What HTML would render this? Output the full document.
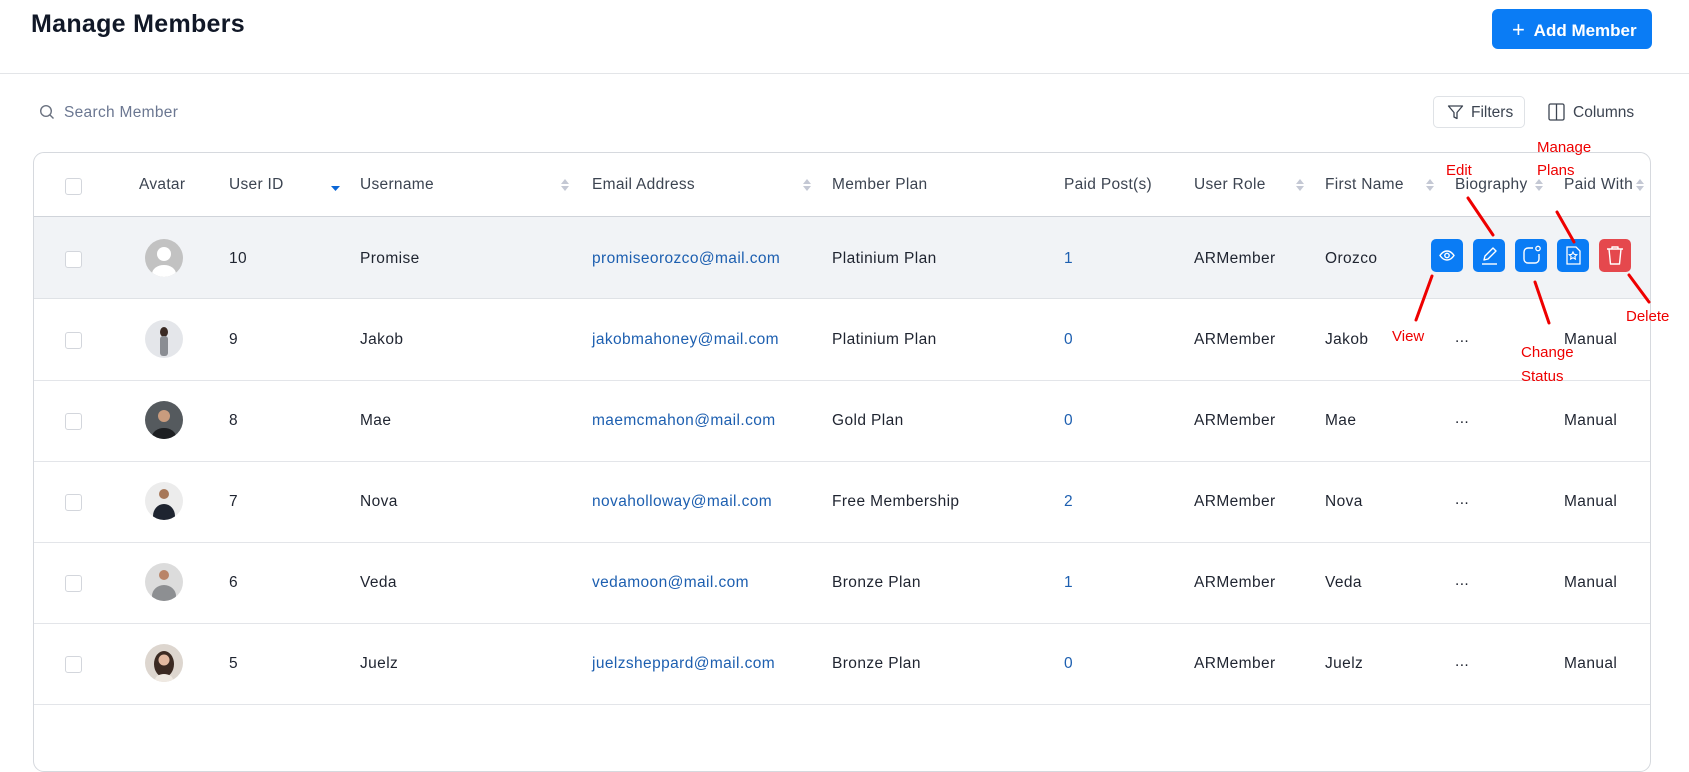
<!DOCTYPE html>
<html><head><meta charset="utf-8"><style>
*{margin:0;padding:0;box-sizing:border-box}
body{width:1689px;height:718px;overflow:hidden;background:#fff;font-family:"Liberation Sans",sans-serif;position:relative;color:#1f2937}
.a{position:absolute;white-space:nowrap}
.h{font-size:15.5px;color:#3c4451;top:176px;letter-spacing:0.3px}
.t{font-size:15.5px;color:#1f2430;letter-spacing:0.4px}
.em{color:#1d5fb0}
.cb{position:absolute;left:65px;width:17px;height:17px;border:1.5px solid #d3d6dc;border-radius:3px;background:#fff}
.sort{position:absolute;width:8px;height:12px}
.btn{position:absolute;top:239px;width:32px;height:33px;border-radius:5px;background:#0a7cf5}
.red{color:#e00;font-size:15px}
.av{position:absolute;left:145px;width:38px;height:38px;border-radius:50%;overflow:hidden}
</style></head><body>
<div class="a" style="left:31px;top:10px;font-size:25px;font-weight:bold;color:#111827;letter-spacing:0.3px">Manage Members</div>
<div class="a" style="left:1492px;top:9px;width:160px;height:40px;background:#0a7cf5;border-radius:6px;color:#fff;font-size:17px;font-weight:bold;line-height:40px;padding-left:20px"><span style="font-weight:normal;font-size:22px;position:relative;top:1px">+</span>&nbsp; Add Member</div>
<div class="a" style="left:0;top:73px;width:1689px;height:1px;background:#e3e5e8"></div>
<svg class="a" style="left:39px;top:104px" width="16" height="16" viewBox="0 0 16 16"><circle cx="7" cy="7" r="5.3" fill="none" stroke="#6b7280" stroke-width="1.4"/><path d="M11 11l3.5 3.5" stroke="#6b7280" stroke-width="1.4"/></svg>
<div class="a" style="left:64px;top:104px;font-size:15.5px;color:#6b7791;letter-spacing:0.3px">Search Member</div>
<div class="a" style="left:1433px;top:96px;width:92px;height:32px;border:1px solid #dfe2e6;border-radius:5px"></div>
<svg class="a" style="left:1447px;top:104px" width="17" height="17" viewBox="0 0 17 17"><path d="M1.5 2h14l-5.5 6.5v6l-3-1.5v-4.5z" fill="none" stroke="#3c4451" stroke-width="1.3" stroke-linejoin="round"/></svg>
<div class="a" style="left:1471px;top:104px;font-size:15.5px;color:#3c4451">Filters</div>
<svg class="a" style="left:1548px;top:103px" width="17" height="18" viewBox="0 0 17 18"><rect x="1" y="1" width="15" height="16" rx="1.5" fill="none" stroke="#3c4451" stroke-width="1.3"/><path d="M8.5 1v16" stroke="#3c4451" stroke-width="1.3"/></svg>
<div class="a" style="left:1573px;top:104px;font-size:15.5px;color:#3c4451">Columns</div>

<div class="a" style="left:33px;top:152px;width:1618px;height:620px;border:1px solid #d6d9de;border-radius:11px;overflow:hidden"></div>
<div class="a" style="left:34px;top:216px;width:1616px;height:1px;background:#d0d4da"></div>
<div class="a" style="left:34px;top:217px;width:1616px;height:82px;background:#f1f3f6;border-bottom:1px solid #dfe2e6"></div>
<div class="a" style="left:34px;top:380px;width:1616px;height:1px;background:#e3e5e9"></div>
<div class="a" style="left:34px;top:461px;width:1616px;height:1px;background:#e3e5e9"></div>
<div class="a" style="left:34px;top:542px;width:1616px;height:1px;background:#e3e5e9"></div>
<div class="a" style="left:34px;top:623px;width:1616px;height:1px;background:#e3e5e9"></div>
<div class="a" style="left:34px;top:704px;width:1616px;height:1px;background:#e3e5e9"></div>

<div class="cb" style="top:178px"></div>
<div class="a h" style="left:139px">Avatar</div>
<div class="a h" style="left:229px">User ID</div>
<svg class="a" style="left:331px;top:186px" width="9" height="6"><path d="M0 0h9L4.5 5z" fill="#0a66d6"/></svg>
<div class="a h" style="left:360px">Username</div>
<div class="a h" style="left:592px">Email Address</div>
<div class="a h" style="left:832px">Member Plan</div>
<div class="a h" style="left:1064px">Paid Post(s)</div>
<div class="a h" style="left:1194px">User Role</div>
<div class="a h" style="left:1325px">First Name</div>
<div class="a h" style="left:1455px">Biography</div>
<div class="a h" style="left:1564px">Paid With</div>
<svg width="0" height="0" style="position:absolute"><defs><g id="s"><path d="M0 5L4 0L8 5z M0 7L4 12L8 7z" fill="#c4c8d4"/></g></defs></svg>
<svg class="sort" style="left:561px;top:179px"><use href="#s"/></svg>
<svg class="sort" style="left:803px;top:179px"><use href="#s"/></svg>
<svg class="sort" style="left:1296px;top:179px"><use href="#s"/></svg>
<svg class="sort" style="left:1426px;top:179px"><use href="#s"/></svg>
<svg class="sort" style="left:1535px;top:179px"><use href="#s"/></svg>
<svg class="sort" style="left:1636px;top:179px"><use href="#s"/></svg>

<div class="cb" style="top:251px"></div>
<div class="av" style="top:239px;background:#c2c2c2"><svg width="38" height="38"><circle cx="19" cy="15" r="7" fill="#fff"/><ellipse cx="19" cy="35" rx="12" ry="9" fill="#fff"/></svg></div>
<div class="a t" style="left:229px;top:250px">10</div>
<div class="a t" style="left:360px;top:250px">Promise</div>
<div class="a t em" style="left:592px;top:250px">promiseorozco@mail.com</div>
<div class="a t" style="left:832px;top:250px">Platinium Plan</div>
<div class="a t em" style="left:1064px;top:250px">1</div>
<div class="a t" style="left:1194px;top:250px">ARMember</div>
<div class="a t" style="left:1325px;top:250px">Orozco</div>

<div class="btn" style="left:1431px"><svg width="32" height="33" viewBox="0 0 32 33"><path d="M9 16.5c4-6 10-6 14 0c-4 6-10 6-14 0z" fill="none" stroke="#fff" stroke-width="1.4"/><circle cx="16" cy="16.5" r="2.2" fill="none" stroke="#fff" stroke-width="1.4"/></svg></div>
<div class="btn" style="left:1473px"><svg width="32" height="33" viewBox="0 0 32 33"><path d="M11 21l1-4l8-8l3 3l-8 8z" fill="none" stroke="#fff" stroke-width="1.4" stroke-linejoin="round"/><path d="M9 25h15" stroke="#fff" stroke-width="1.4"/></svg></div>
<div class="btn" style="left:1515px"><svg width="32" height="33" viewBox="0 0 32 33"><path d="M18 9h-5a4 4 0 0 0-4 4v7a4 4 0 0 0 4 4h7a4 4 0 0 0 4-4v-5" fill="none" stroke="#fff" stroke-width="1.4"/><circle cx="23" cy="9.5" r="2.2" fill="none" stroke="#fff" stroke-width="1.3"/></svg></div>
<div class="btn" style="left:1557px"><svg width="32" height="33" viewBox="0 0 32 33"><path d="M10 8h9l4 4v13h-13z" fill="none" stroke="#fff" stroke-width="1.3"/><path d="M16 13l1.2 2.4l2.6.3l-1.9 1.8l.5 2.6l-2.4-1.3l-2.4 1.3l.5-2.6l-1.9-1.8l2.6-.3z" fill="none" stroke="#fff" stroke-width="1.1"/></svg></div>
<div class="btn" style="left:1599px;background:#e5484d"><svg width="32" height="33" viewBox="0 0 32 33"><path d="M8 10h16M13 10v-2h6v2M10 10l1.5 15h9l1.5-15" fill="none" stroke="#fff" stroke-width="1.4" stroke-linejoin="round"/></svg></div>

<div class="cb" style="top:332px"></div>
<div class="av" style="top:320px;background:#e4e6ea"><svg width="38" height="38"><ellipse cx="19" cy="12" rx="4" ry="5" fill="#3a2a24"/><rect x="15" y="16" width="8" height="20" rx="3" fill="#8a8d93"/></svg></div>
<div class="a t" style="left:229px;top:331px">9</div>
<div class="a t" style="left:360px;top:331px">Jakob</div>
<div class="a t em" style="left:592px;top:331px">jakobmahoney@mail.com</div>
<div class="a t" style="left:832px;top:331px">Platinium Plan</div>
<div class="a t em" style="left:1064px;top:331px">0</div>
<div class="a t" style="left:1194px;top:331px">ARMember</div>
<div class="a t" style="left:1325px;top:331px">Jakob</div>
<div class="a t" style="left:1455px;top:329px">...</div>
<div class="a t" style="left:1564px;top:331px">Manual</div>

<div class="cb" style="top:413px"></div>
<div class="av" style="top:401px;background:#555a5e"><svg width="38" height="38"><circle cx="19" cy="15" r="6" fill="#c99c7e"/><ellipse cx="19" cy="36" rx="12" ry="9" fill="#1d1f22"/></svg></div>
<div class="a t" style="left:229px;top:412px">8</div>
<div class="a t" style="left:360px;top:412px">Mae</div>
<div class="a t em" style="left:592px;top:412px">maemcmahon@mail.com</div>
<div class="a t" style="left:832px;top:412px">Gold Plan</div>
<div class="a t em" style="left:1064px;top:412px">0</div>
<div class="a t" style="left:1194px;top:412px">ARMember</div>
<div class="a t" style="left:1325px;top:412px">Mae</div>
<div class="a t" style="left:1455px;top:410px">...</div>
<div class="a t" style="left:1564px;top:412px">Manual</div>

<div class="cb" style="top:494px"></div>
<div class="av" style="top:482px;background:#ececec"><svg width="38" height="38"><circle cx="19" cy="12" r="5" fill="#a77859"/><ellipse cx="19" cy="34" rx="11" ry="12" fill="#1e2430"/></svg></div>
<div class="a t" style="left:229px;top:493px">7</div>
<div class="a t" style="left:360px;top:493px">Nova</div>
<div class="a t em" style="left:592px;top:493px">novaholloway@mail.com</div>
<div class="a t" style="left:832px;top:493px">Free Membership</div>
<div class="a t em" style="left:1064px;top:493px">2</div>
<div class="a t" style="left:1194px;top:493px">ARMember</div>
<div class="a t" style="left:1325px;top:493px">Nova</div>
<div class="a t" style="left:1455px;top:491px">...</div>
<div class="a t" style="left:1564px;top:493px">Manual</div>

<div class="cb" style="top:575px"></div>
<div class="av" style="top:563px;background:#dcdcdc"><svg width="38" height="38"><circle cx="19" cy="12" r="5" fill="#b98468"/><ellipse cx="19" cy="33" rx="12" ry="11" fill="#8d8f92"/></svg></div>
<div class="a t" style="left:229px;top:574px">6</div>
<div class="a t" style="left:360px;top:574px">Veda</div>
<div class="a t em" style="left:592px;top:574px">vedamoon@mail.com</div>
<div class="a t" style="left:832px;top:574px">Bronze Plan</div>
<div class="a t em" style="left:1064px;top:574px">1</div>
<div class="a t" style="left:1194px;top:574px">ARMember</div>
<div class="a t" style="left:1325px;top:574px">Veda</div>
<div class="a t" style="left:1455px;top:572px">...</div>
<div class="a t" style="left:1564px;top:574px">Manual</div>

<div class="cb" style="top:656px"></div>
<div class="av" style="top:644px;background:#ddd6cf"><svg width="38" height="38"><ellipse cx="19" cy="20" rx="10" ry="13" fill="#3b2a22"/><circle cx="19" cy="16" r="5.5" fill="#e2b8a0"/><ellipse cx="19" cy="36" rx="9" ry="6" fill="#efe9e2"/></svg></div>
<div class="a t" style="left:229px;top:655px">5</div>
<div class="a t" style="left:360px;top:655px">Juelz</div>
<div class="a t em" style="left:592px;top:655px">juelzsheppard@mail.com</div>
<div class="a t" style="left:832px;top:655px">Bronze Plan</div>
<div class="a t em" style="left:1064px;top:655px">0</div>
<div class="a t" style="left:1194px;top:655px">ARMember</div>
<div class="a t" style="left:1325px;top:655px">Juelz</div>
<div class="a t" style="left:1455px;top:653px">...</div>
<div class="a t" style="left:1564px;top:655px">Manual</div>

<svg class="a" style="left:0;top:0" width="1689" height="718"><g stroke="#e00" stroke-width="3" stroke-linecap="round">
<path d="M1468 198L1493 235"/><path d="M1557 212L1574 242"/><path d="M1432 276L1416 320"/><path d="M1535 282L1549 323"/><path d="M1629 275L1649 302"/></g></svg>
<div class="a red" style="left:1446px;top:162px">Edit</div>
<div class="a red" style="left:1537px;top:139px">Manage</div>
<div class="a red" style="left:1537px;top:162px">Plans</div>
<div class="a red" style="left:1392px;top:328px">View</div>
<div class="a red" style="left:1521px;top:344px">Change</div>
<div class="a red" style="left:1521px;top:368px">Status</div>
<div class="a red" style="left:1626px;top:308px">Delete</div>
</body></html>
